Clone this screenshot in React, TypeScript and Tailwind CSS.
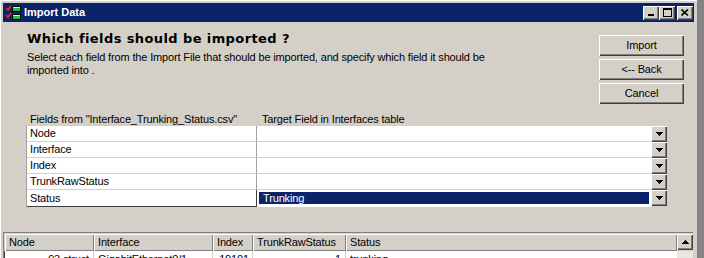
import React from "react"

const fields = ["Node", "Interface", "Index", "TrunkRawStatus"]

function AppIcon() {
  return (
    <svg width="16" height="16" viewBox="0 0 16 16" shapeRendering="crispEdges">
      <path d="M1 3 L3 5 L6 1" stroke="#ff2020" strokeWidth="1.6" fill="none" shapeRendering="auto" />
      <path d="M1 10 L3 12 L6 8" stroke="#ff2020" strokeWidth="1.6" fill="none" shapeRendering="auto" />
      <rect x="7.5" y="1.5" width="8" height="5" fill="#20c040" stroke="#000" />
      <rect x="8" y="2" width="7" height="1" fill="#c0ffc0" />
      <rect x="7.5" y="9.5" width="8" height="5" fill="#20c040" stroke="#000" />
      <rect x="8" y="10" width="7" height="1" fill="#c0ffc0" />
    </svg>
  )
}

function CaptionButton({ children, className = "" }: { children: React.ReactNode; className?: string }) {
  return (
    <div className={`flex h-[14px] w-[16px] items-center justify-center bg-[#d4d0c8] shadow-[inset_1px_1px_0_#fff,inset_-1px_-1px_0_#404040,inset_-2px_-2px_0_#808080] ${className}`}>
      {children}
    </div>
  )
}

function DropButton() {
  return (
    <div className="flex h-[16px] w-[16px] items-center justify-center bg-[#d4d0c8] shadow-[inset_1px_1px_0_#fff,inset_-1px_-1px_0_#404040,inset_-2px_-2px_0_#808080]">
      <svg width="7" height="4" viewBox="0 0 7 4" shapeRendering="crispEdges">
        <path d="M0 0 H7 V1 H6 V2 H5 V3 H4 V4 H3 V3 H2 V2 H1 V1 H0 Z" fill="#000" />
      </svg>
    </div>
  )
}

function PushButton({ label }: { label: string }) {
  return (
    <button className="flex h-[21px] w-[85px] items-center justify-center bg-[#d4d0c8] text-[11px] shadow-[inset_1px_1px_0_#fff,inset_-1px_-1px_0_#404040,inset_-2px_-2px_0_#808080]">
      {label}
    </button>
  )
}

export default function App() {
  return (
    <div className="flex h-[258px] w-[704px] overflow-hidden bg-[#858585] font-['Liberation_Sans',Arial,sans-serif] text-[11px] tracking-[-0.15px] text-black">
      <div className="flex w-[697px] shrink-0 flex-col bg-[#d4d0c8] px-[3px] pt-[3px] shadow-[inset_1px_1px_0_#fff]">
        {/* title bar */}
        <div className="flex h-[19px] shrink-0 items-center bg-[#0a246a] pl-[2px] pr-[1px]">
          <AppIcon />
          <span className="ml-[3px] text-[11px] font-bold tracking-normal text-white">Import Data</span>
          <div className="ml-auto flex items-center">
            <CaptionButton>
              <div className="mt-[5px] h-[2px] w-[6px] bg-black" />
            </CaptionButton>
            <CaptionButton>
              <div className="h-[9px] w-[9px] border border-t-2 border-black" />
            </CaptionButton>
            <CaptionButton className="ml-[2px]">
              <svg width="8" height="7" viewBox="0 0 8 7">
                <path d="M0.5 0.5 L7 6.5 M7 0.5 L0.5 6.5" stroke="#000" strokeWidth="1.6" />
              </svg>
            </CaptionButton>
          </div>
        </div>

        {/* top section */}
        <div className="flex">
          <div className="flex-1 pl-[24px]">
            <h1 className="mt-[9px] font-['DejaVu_Sans',Verdana,sans-serif] text-[13px] font-bold leading-[16px] tracking-[0.4px]">
              Which fields should be imported ?
            </h1>
            <p className="mt-[4px] w-[470px] leading-[13px]">
              Select each field from the Import File that should be imported, and specify which field it should be imported into .
            </p>
          </div>
          <div className="mt-[13px] flex flex-col gap-[3px] pr-[10px]">
            <PushButton label="Import" />
            <PushButton label="<-- Back" />
            <PushButton label="Cancel" />
          </div>
        </div>

        {/* field mapping grid */}
        <div className="mt-[9px] ml-[23px] w-[641px]">
          <div className="flex h-[13px] leading-[13px]">
            <div className="w-[231px] pl-[4px]">Fields from "Interface_Trunking_Status.csv"</div>
            <div className="pl-[5px]">Target Field in Interfaces table</div>
          </div>
          <div className="border-l border-[#a0a0a0]">
            {fields.map((f) => (
              <div key={f} className="flex h-[16px]">
                <div className="flex w-[230px] items-center border-b border-r border-[#d4d0c8] bg-white pl-[3px] border-r-[#a0a0a0]">{f}</div>
                <div className="flex-1 border-b border-[#d4d0c8] bg-white" />
                <DropButton />
              </div>
            ))}
            <div className="flex h-[17px]">
              <div className="flex w-[230px] items-center border-b border-r border-[#404040] bg-white pl-[3px]">Status</div>
              <div className="flex flex-1 border-b border-white bg-white p-[2px]">
                <div className="flex flex-1 items-center bg-[#0a246a] pl-[4px] text-white">Trunking</div>
              </div>
              <DropButton />
            </div>
          </div>
        </div>

        {/* preview list */}
        <div className="mt-[25px] mr-[1px] flex-1 border-l border-t border-[#808080] bg-white shadow-[inset_1px_1px_0_#404040]">
          <div className="flex h-[18px] bg-[#d4d0c8] pl-[1px] pt-[1px]">
            <div className="w-[89px] pl-[4px] leading-[16px] shadow-[inset_1px_1px_0_#fff,inset_-1px_-1px_0_#808080]">Node</div>
            <div className="w-[119px] pl-[4px] leading-[16px] shadow-[inset_1px_1px_0_#fff,inset_-1px_-1px_0_#808080]">Interface</div>
            <div className="w-[40px] pl-[4px] leading-[16px] shadow-[inset_1px_1px_0_#fff,inset_-1px_-1px_0_#808080]">Index</div>
            <div className="w-[93px] pl-[4px] leading-[16px] shadow-[inset_1px_1px_0_#fff,inset_-1px_-1px_0_#808080]">TrunkRawStatus</div>
            <div className="flex-1 pl-[4px] leading-[16px] shadow-[inset_1px_1px_0_#fff,inset_-1px_-1px_0_#808080]">Status</div>
            <div className="flex h-[16px] w-[16px] items-center justify-center shadow-[inset_1px_1px_0_#fff,inset_-1px_-1px_0_#404040,inset_-2px_-2px_0_#808080]">
              <svg width="7" height="4" viewBox="0 0 7 4" shapeRendering="crispEdges">
                <path d="M3 0 H4 V1 H5 V2 H6 V3 H7 V4 H0 V3 H1 V2 H2 V1 H3 Z" fill="#000" />
              </svg>
            </div>
          </div>
          <div className="flex h-[16px] pl-[1px] leading-[16px]">
            <div className="w-[89px] border-r border-[#d4d0c8] pr-[4px] text-right">93.struct</div>
            <div className="w-[119px] border-r border-[#d4d0c8] pl-[4px]">GigabitEthernet0/1</div>
            <div className="w-[40px] border-r border-[#d4d0c8] pr-[3px] text-right">10101</div>
            <div className="w-[93px] border-r border-[#d4d0c8] pr-[4px] text-right">1</div>
            <div className="flex-1 pl-[4px]">trunking</div>
            <div className="w-[16px] bg-[#e8e6e0]" />
          </div>
        </div>
      </div>
      <div className="flex-1" />
    </div>
  )
}
